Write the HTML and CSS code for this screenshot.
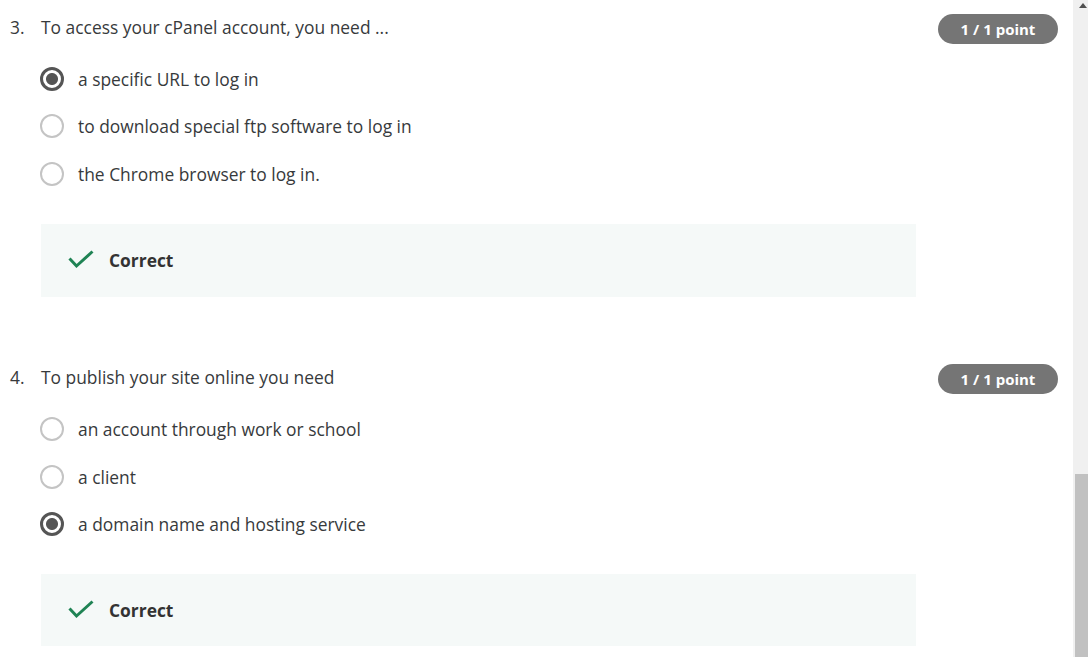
FILE: index.html
```html
<!DOCTYPE html>
<html lang="en">
<head>
<meta charset="utf-8">
<title>Quiz</title>
<link rel="stylesheet" href="styles.css">
</head>
<body>
<div class="page">
  <main class="quiz">
    <section class="question">
      <div class="q-head">
        <span class="q-num">3.</span>
        <span class="q-text">To access your cPanel account, you need ...</span>
        <span class="badge">1 / 1 point</span>
      </div>
      <ul class="options">
        <li class="option"><span class="radio checked"></span><span>a specific URL to log in</span></li>
        <li class="option"><span class="radio"></span><span>to download special ftp software to log in</span></li>
        <li class="option"><span class="radio"></span><span>the Chrome browser to log in.</span></li>
      </ul>
      <div class="feedback">
        <svg class="check" width="26" height="19" viewBox="0 0 26 19"><polyline points="1.5,8.5 8.5,16 24.5,1.5" fill="none" stroke="#1f8354" stroke-width="3"/></svg>
        <span class="fb-text">Correct</span>
      </div>
    </section>
    <section class="question second">
      <div class="q-head">
        <span class="q-num">4.</span>
        <span class="q-text">To publish your site online you need</span>
        <span class="badge">1 / 1 point</span>
      </div>
      <ul class="options">
        <li class="option"><span class="radio"></span><span>an account through work or school</span></li>
        <li class="option"><span class="radio"></span><span>a client</span></li>
        <li class="option"><span class="radio checked"></span><span>a domain name and hosting service</span></li>
      </ul>
      <div class="feedback">
        <svg class="check" width="26" height="19" viewBox="0 0 26 19"><polyline points="1.5,8.5 8.5,16 24.5,1.5" fill="none" stroke="#1f8354" stroke-width="3"/></svg>
        <span class="fb-text">Correct</span>
      </div>
    </section>
  </main>
  <div class="scrollbar">
    <div class="arrow"></div>
    <div class="track"></div>
    <div class="thumb"></div>
  </div>
</div>
</body>
</html>
```

FILE: styles.css
```css
html, body {
  margin: 0;
  padding: 0;
  height: 657px;
  overflow: hidden;
  background: #ffffff;
}
body {
  font-family: "Open Sans", "Liberation Sans", sans-serif;
  color: #373a3c;
  font-size: 17.4px;
}
.page {
  display: flex;
  height: 657px;
}
.quiz {
  flex: 1;
  padding: 14px 15px 0 0;
}
.question.second {
  margin-top: 67px;
}
.q-head {
  display: flex;
  align-items: center;
  height: 30px;
}
.q-num {
  width: 41px;
  padding-left: 10px;
  box-sizing: border-box;
  flex: none;
}
.q-num, .q-text {
  line-height: 24px;
  position: relative;
  top: -2px;
}
.q-text {
  flex: 1;
}
.badge {
  flex: none;
  width: 120px;
  height: 30px;
  border-radius: 15px;
  background: #757575;
  color: #ffffff;
  font-weight: 700;
  font-size: 15px;
  display: flex;
  align-items: center;
  justify-content: center;
}
.options {
  list-style: none;
  margin: 11px 0 0 0;
  padding: 0 0 0 40px;
}
.second .options {
  margin-top: 12px;
}
.option {
  display: flex;
  align-items: center;
  gap: 14px;
  height: 47.5px;
}
.radio {
  width: 24px;
  height: 24px;
  box-sizing: border-box;
  border: 2px solid #c4c4c4;
  border-radius: 50%;
  flex: none;
}
.radio.checked {
  border: 3px solid #555555;
  background: radial-gradient(circle, #555555 0 5.5px, #ffffff 6.5px);
}
.feedback {
  margin: 26px 0 0 41px;
  width: 875px;
  height: 73px;
  background: #f5f9f8;
  display: flex;
  align-items: center;
  padding-left: 27px;
  box-sizing: border-box;
  gap: 15px;
}
.second .feedback {
  height: 72px;
}
.check {
  flex: none;
  position: relative;
  top: -1px;
}
.fb-text {
  font-weight: 700;
  color: #333333;
}
.scrollbar {
  width: 15px;
  flex: none;
  background: #f0f0f0;
  display: flex;
  flex-direction: column;
  align-items: flex-end;
}
.arrow {
  width: 0;
  height: 0;
  margin: 3px 1px 0 0;
  border-left: 4.5px solid transparent;
  border-right: 4.5px solid transparent;
  border-bottom: 5px solid #505050;
}
.track {
  flex: 1;
}
.thumb {
  width: 13px;
  height: 183px;
  background: #c1c1c1;
}
```
